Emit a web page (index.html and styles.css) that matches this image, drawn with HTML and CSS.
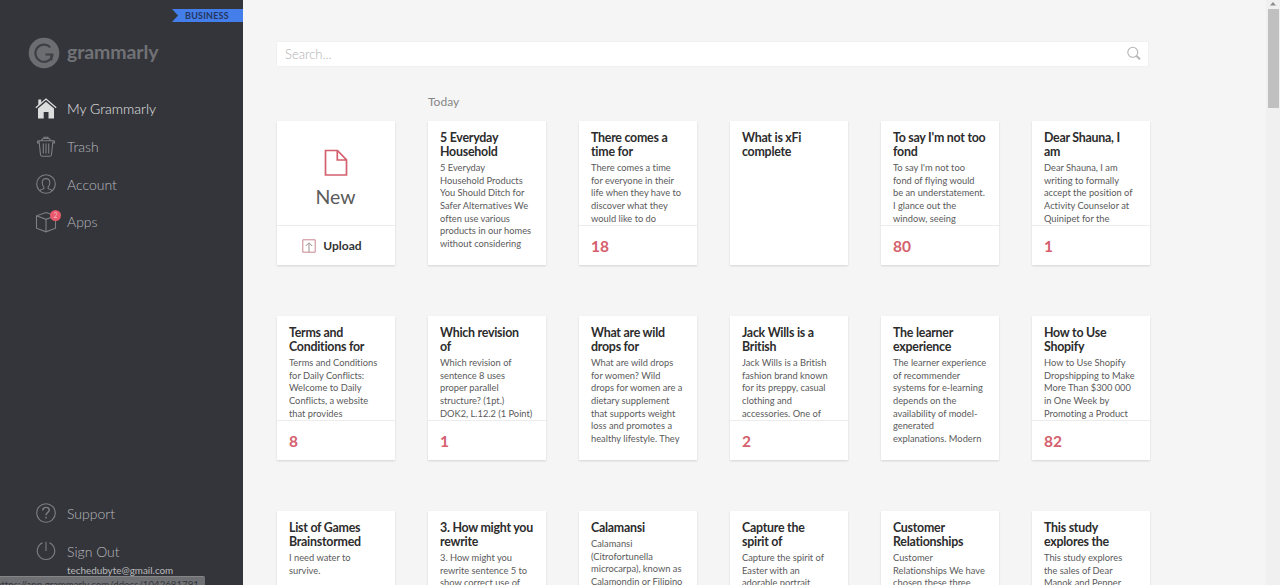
FILE: index.html
```html
<!DOCTYPE html>
<html lang="en">
<head>
	<meta charset="UTF-8">
	<meta name="viewport" content="width=device-width, initial-scale=1.0">
	<title>My Grammarly</title>
	<link rel="stylesheet" href="styles.css">
</head>
<body>
	<aside class="sidebar">
		<span class="ribbon">BUSINESS</span>
		<div class="logo">
			<svg width="32" height="32" viewBox="0 0 32 32">
				<circle cx="16" cy="16" r="15.3" fill="#6c6d71"/>
				<path d="M22.2 10.2A8.6 8.6 0 1 0 24.5 17.6" fill="none" stroke="#3f4045" stroke-width="2.2"/>
				<path d="M17.5 17.4H25.2M23.4 17.4V23.5" fill="none" stroke="#3f4045" stroke-width="2"/>
			</svg>
			<span class="logo_text">grammarly</span>
		</div>
		<nav class="menu">
			<a class="item active">
				<svg width="22" height="22" viewBox="0 0 22 22">
					<path d="M3 10.5L11 3.8L19 10.5V20.5H13.5V14H8.7V20.5H3Z" fill="#dcdddd"/>
					<path d="M3.3 7.5V1.5H6.2V5" fill="#dcdddd"/>
					<path class="roof" d="M.8 9.7L11 1L21.2 9.7"/>
				</svg>
				<span>My Grammarly</span>
			</a>
			<a class="item">
				<svg width="22" height="22" viewBox="0 0 22 22">
					<path d="M2.5 4.8H19.5M4 4.8L5.5 18.5Q5.7 20.3 7.3 20.3H14.7Q16.3 20.3 16.5 18.5L18 4.8M6.5 4.5Q7 2.5 8.6 2.5H13.4Q15 2.5 15.5 4.5M9 2.3V1.3H13V2.3M8.3 7.5V17.5M11 7.5V17.5M13.7 7.5V17.5M2.5 5V7H4M19.5 5V7H18"/>
				</svg>
				<span>Trash</span>
			</a>
			<a class="item">
				<svg width="22" height="22" viewBox="0 0 22 22">
					<circle cx="11" cy="11" r="9.3"/>
					<path d="M4.9 18Q5.6 16.4 8 16Q9.3 15.6 8.9 14.1Q7.2 12.4 7.2 9.6Q7.2 5.6 11 5.6Q14.8 5.6 14.8 9.6Q14.8 12.4 13.1 14.1Q12.7 15.6 14 16Q16.4 16.4 17.1 18"/>
				</svg>
				<span>Account</span>
			</a>
			<a class="item">
				<svg width="22" height="22" viewBox="0 0 22 22">
					<path d="M11 1.5L20.5 4.8V17.2L11 20.8L1.5 17.2V4.8ZM1.5 4.8L11 8.3L20.5 4.8M11 8.3V20.8"/>
				</svg>
				<b class="badge">2</b>
				<span>Apps</span>
			</a>
		</nav>
		<div class="menu menu_bottom">
			<a class="item">
				<svg width="22" height="22" viewBox="0 0 22 22">
					<circle cx="11" cy="11" r="9.3"/>
					<path d="M7.8 8.4Q7.9 5.4 11 5.4Q14.2 5.4 14.2 8.1Q14.2 9.6 12.6 10.6Q11 11.6 11 13.2M11 14.8V16.6" stroke-width="1.4"/>
				</svg>
				<span>Support</span>
			</a>
			<a class="item">
				<svg width="22" height="22" viewBox="0 0 22 22">
					<path d="M7.6 2.8A8.7 8.7 0 1 0 14.4 2.8M11 1.8V11"/>
				</svg>
				<span>Sign Out</span>
			</a>
			<div class="email">techedubyte@gmail.com</div>
		</div>
	</aside>

	<main class="main">
		<div class="search">
			<span>Search...</span>
			<svg width="16" height="16" viewBox="0 0 16 16" fill="none" stroke="#b4b4b4">
				<circle cx="6.8" cy="6.3" r="5" stroke-width="1.1"/>
				<path d="M10.5 10L14 13.2" stroke-width="1.9"/>
			</svg>
		</div>
		<div class="today">Today</div>
		<div class="docs">
			<div class="card card_new">
				<div class="new">
					<svg width="24" height="28" viewBox="0 0 24 28" fill="none" stroke="#d5606d" stroke-width="1.7">
						<path d="M1.5 1.5H13.5L22.5 10.8V26H1.5ZM13.3 1.5V11H22.5"/>
					</svg>
					<span>New</span>
				</div>
				<div class="upload">
					<svg width="14" height="14" viewBox="0 0 14 14" fill="none" stroke="#c9858d">
						<path d="M.8 .8H13.2V13.2H.8Z"/>
						<path d="M7 13V4M3.8 7L7 3.8L10.2 7" stroke="#a08f92"/>
					</svg>
					<span>Upload</span>
				</div>
			</div>
			<div class="card">
				<h2>5 Everyday<br>Household</h2>
				<p>5 Everyday<br>Household Products<br>You Should Ditch for<br>Safer Alternatives We<br>often use various<br>products in our homes<br>without considering</p>
			</div>
			<div class="card">
				<h2>There comes a<br>time for</h2>
				<p>There comes a time<br>for everyone in their<br>life when they have to<br>discover what they<br>would like to do</p>
				<div class="count">18</div>
			</div>
			<div class="card">
				<h2>What is xFi<br>complete</h2>
			</div>
			<div class="card">
				<h2>To say I'm not too<br>fond</h2>
				<p>To say I'm not too<br>fond of flying would<br>be an understatement.<br>I glance out the<br>window, seeing</p>
				<div class="count">80</div>
			</div>
			<div class="card">
				<h2>Dear Shauna, I<br>am</h2>
				<p>Dear Shauna, I am<br>writing to formally<br>accept the position of<br>Activity Counselor at<br>Quinipet for the</p>
				<div class="count">1</div>
			</div>

			<div class="card">
				<h2>Terms and<br>Conditions for</h2>
				<p>Terms and Conditions<br>for Daily Conflicts:<br>Welcome to Daily<br>Conflicts, a website<br>that provides</p>
				<div class="count">8</div>
			</div>
			<div class="card">
				<h2>Which revision<br>of</h2>
				<p>Which revision of<br>sentence 8 uses<br>proper parallel<br>structure? (1pt.)<br>DOK2, L.12.2 (1 Point)</p>
				<div class="count">1</div>
			</div>
			<div class="card">
				<h2>What are wild<br>drops for</h2>
				<p>What are wild drops<br>for women? Wild<br>drops for women are a<br>dietary supplement<br>that supports weight<br>loss and promotes a<br>healthy lifestyle. They</p>
			</div>
			<div class="card">
				<h2>Jack Wills is a<br>British</h2>
				<p>Jack Wills is a British<br>fashion brand known<br>for its preppy, casual<br>clothing and<br>accessories. One of</p>
				<div class="count">2</div>
			</div>
			<div class="card">
				<h2>The learner<br>experience</h2>
				<p>The learner experience<br>of recommender<br>systems for e-learning<br>depends on the<br>availability of model-<br>generated<br>explanations. Modern</p>
			</div>
			<div class="card">
				<h2>How to Use<br>Shopify</h2>
				<p>How to Use Shopify<br>Dropshipping to Make<br>More Than $300 000<br>in One Week by<br>Promoting a Product</p>
				<div class="count">82</div>
			</div>

			<div class="card">
				<h2>List of Games<br>Brainstormed</h2>
				<p>I need water to<br>survive.</p>
			</div>
			<div class="card">
				<h2>3. How might you<br>rewrite</h2>
				<p>3. How might you<br>rewrite sentence 5 to<br>show correct use of</p>
			</div>
			<div class="card">
				<h2>Calamansi</h2>
				<p>Calamansi<br>(Citrofortunella<br>microcarpa), known as<br>Calamondin or Filipino</p>
			</div>
			<div class="card">
				<h2>Capture the<br>spirit of</h2>
				<p>Capture the spirit of<br>Easter with an<br>adorable portrait</p>
			</div>
			<div class="card">
				<h2>Customer<br>Relationships</h2>
				<p>Customer<br>Relationships We have<br>chosen these three</p>
			</div>
			<div class="card">
				<h2>This study<br>explores the</h2>
				<p>This study explores<br>the sales of Dear<br>Manok and Pepper</p>
			</div>
		</div>
	</main>

	<div class="scrollbar">
		<svg width="8" height="5" viewBox="0 0 8 5"><path d="M1 4.5L4 1L7 4.5Z" fill="#8c8c8c"/></svg>
		<div class="thumb"></div>
	</div>

	<div class="status">https://app.grammarly.com/ddocs/1042681791</div>
</body>
</html>
```

FILE: styles.css
```css
* {
	box-sizing: border-box;
}

body {
	margin: 0;
	display: flex;
	height: 100vh;
	overflow: hidden;
	position: relative;
	background-color: #f5f5f5;
	font-family: Lato, sans-serif;
	font-variant-ligatures: none;
	white-space: nowrap;
}

.sidebar {
	width: 243px;
	flex: none;
	display: flex;
	flex-direction: column;
	padding-top: 9px;
	background-color: #34353b;
}

.ribbon {
	align-self: flex-end;
	width: 71px;
	height: 13px;
	padding-left: 13px;
	background-color: #437eea;
	clip-path: polygon(0 0, 100% 0, 100% 100%, 0 100%, 6px 50%);
	color: #26365c;
	font-size: 9px;
	font-weight: 700;
	line-height: 14px;
	letter-spacing: 0.2px;
}

.logo {
	display: flex;
	align-items: center;
	height: 32px;
	margin-top: 15px;
	padding-left: 28px;
	gap: 7px;
}

.logo_text {
	color: #717276;
	font-size: 19.5px;
	font-weight: 700;
	line-height: 28px;
	letter-spacing: -0.1px;
	margin-top: -3px;
}

.menu {
	display: flex;
	flex-direction: column;
	padding-left: 35px;
	margin-top: 21px;
}

.item {
	position: relative;
	display: flex;
	align-items: center;
	gap: 10px;
	height: 37.7px;
	color: #b8b9bc;
	font-size: 14px;
	font-weight: 300;
}

.item svg {
	fill: none;
	stroke: #7e7f83;
	stroke-width: 1.1;
}

.item.active {
	color: #e4e4e4;
}

.item.active svg {
	stroke: none;
}

.roof {
	fill: none;
	stroke: #dcdddd;
	stroke-width: 1.3;
}

.badge {
	position: absolute;
	left: 15px;
	top: 7px;
	width: 11px;
	height: 11px;
	border-radius: 50%;
	background-color: #e9596b;
	color: #f6b8bf;
	font-size: 7px;
	font-weight: 400;
	line-height: 11px;
	text-align: center;
}

.menu_bottom {
	margin-top: auto;
	padding-bottom: 7px;
}

.email {
	padding-left: 32px;
	color: #b9babc;
	font-size: 9.9px;
	line-height: 14px;
	margin-top: -7px;
	padding-bottom: 1px;
}

.main {
	flex: 1;
	padding: 42px 0 0 34px;
}

.search {
	display: flex;
	align-items: center;
	justify-content: space-between;
	width: 871px;
	height: 24px;
	padding: 0 6px 0 8px;
	background-color: #fff;
	box-shadow: 0 0 1px #ddd;
	color: #b0b0b0;
	font-size: 13px;
	font-weight: 300;
}

.today {
	margin: 27px 0 10px 151px;
	color: #858585;
	font-size: 12px;
	line-height: 18px;
}

.docs {
	display: grid;
	grid-template-columns: repeat(6, 118px);
	grid-auto-rows: 144px;
	gap: 51px 33px;
}

.card {
	display: flex;
	flex-direction: column;
	padding: 10px 0 0 12px;
	background-color: #fff;
	box-shadow: 0 1px 2px rgba(0, 0, 0, 0.14);
	overflow: hidden;
}

.card h2 {
	margin: 0;
	color: #2c2c2c;
	font-size: 12.4px;
	font-weight: 700;
	line-height: 14px;
	letter-spacing: -0.25px;
}

.card p {
	margin: 3px 0 0;
	color: #5a5a5a;
	font-size: 9.3px;
	line-height: 12.65px;
}

.count {
	flex: none;
	height: 40px;
	margin: auto 0 0 -12px;
	padding-left: 12px;
	border-top: 1px solid #ececec;
	color: #d5606d;
	font-size: 15.5px;
	font-weight: 700;
	line-height: 40px;
}

.card_new {
	padding: 0;
}

.new {
	flex: 1;
	display: flex;
	flex-direction: column;
	align-items: center;
	padding: 28px 1px 0 0;
	color: #5c5c5c;
	font-size: 19.5px;
	line-height: 24px;
}

.new span {
	margin-top: 8px;
}

.upload {
	display: flex;
	align-items: center;
	justify-content: center;
	height: 40px;
	gap: 7px;
	padding-right: 8px;
	border-top: 1px solid #ececec;
	color: #333;
	font-size: 12px;
	font-weight: 700;
}

.scrollbar {
	width: 14px;
	display: flex;
	flex-direction: column;
	align-items: center;
	padding-top: 1px;
	background-color: #f0f0f0;
}

.thumb {
	width: 11px;
	height: 99px;
	margin-top: 3px;
	background-color: #c0c0c0;
}

/* link preview shown by the browser over the page corner */
.status {
	position: absolute;
	left: 0;
	bottom: 0;
	width: 205px;
	height: 9px;
	overflow: hidden;
	border-top: 1px solid #858585;
	border-radius: 0 2px 0 0;
	background-color: #6f7073;
	color: #34353b;
	font-size: 9.7px;
	line-height: 14px;
	text-indent: -4px;
}
```
